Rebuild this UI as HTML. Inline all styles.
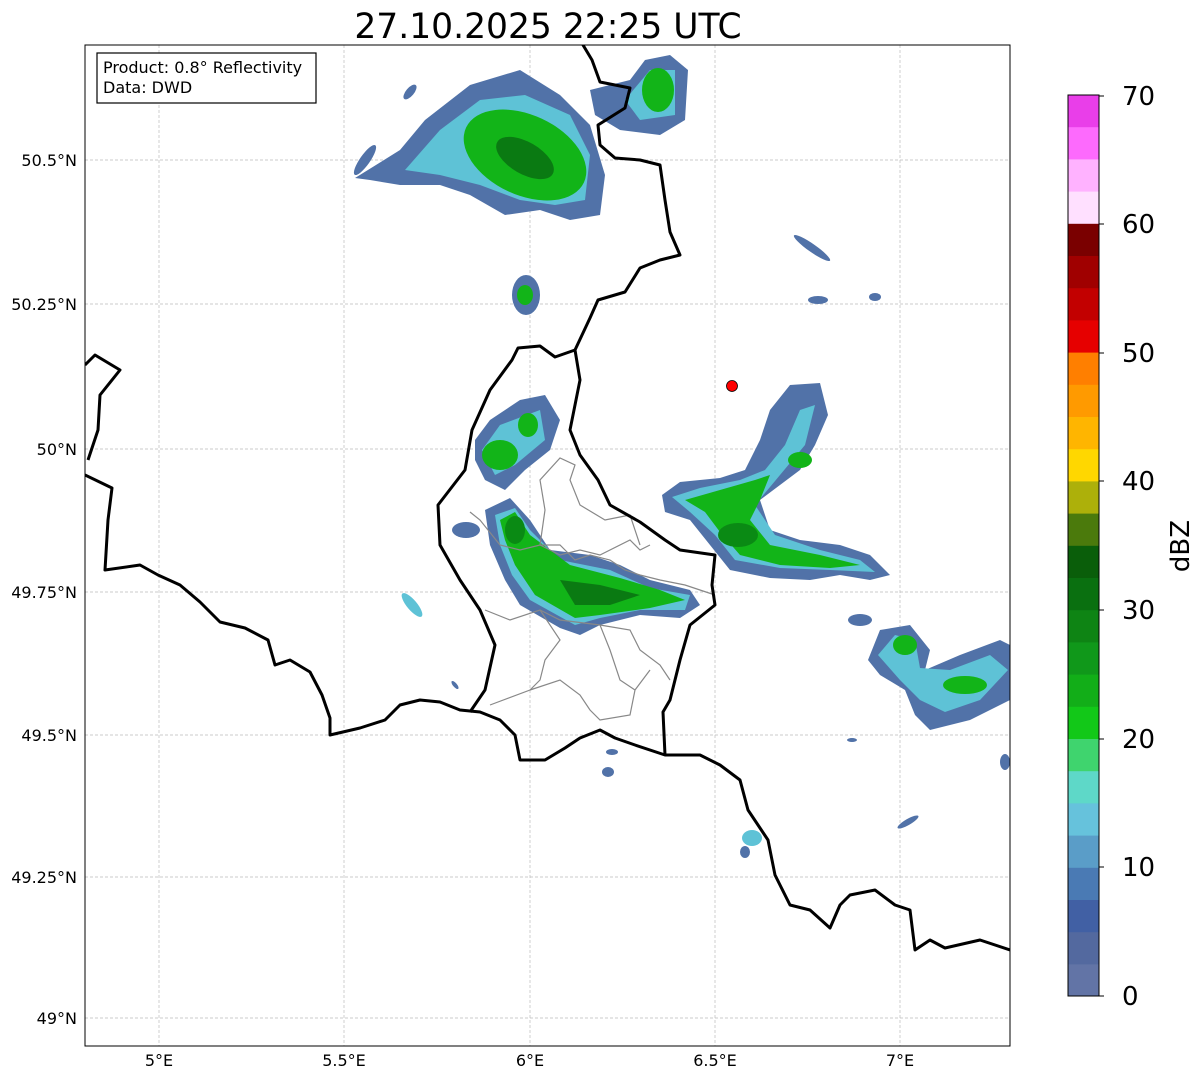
<!DOCTYPE html>
<html><head><meta charset="utf-8"><style>
body{margin:0;background:#fff;width:1202px;height:1081px;overflow:hidden;font-family:"DejaVu Sans",sans-serif}
</style></head><body>
<svg width="1202" height="1081" viewBox="0 0 1202 1081" xmlns="http://www.w3.org/2000/svg" font-family="DejaVu Sans, sans-serif">
<defs>
<clipPath id="ax"><rect x="85" y="45" width="925" height="1001"/></clipPath>
</defs>
<text x="548" y="38" font-size="34.5" text-anchor="middle">27.10.2025 22:25 UTC</text>
<g clip-path="url(#ax)">
<g stroke="#bbb" stroke-width="0.7" stroke-dasharray="3,2">
<line x1="159" y1="45" x2="159" y2="1046"/><line x1="344" y1="45" x2="344" y2="1046"/><line x1="530" y1="45" x2="530" y2="1046"/><line x1="715" y1="45" x2="715" y2="1046"/><line x1="900" y1="45" x2="900" y2="1046"/>
<line x1="85" y1="160" x2="1010" y2="160"/><line x1="85" y1="304" x2="1010" y2="304"/><line x1="85" y1="449" x2="1010" y2="449"/><line x1="85" y1="592" x2="1010" y2="592"/><line x1="85" y1="735" x2="1010" y2="735"/><line x1="85" y1="877" x2="1010" y2="877"/><line x1="85" y1="1018" x2="1010" y2="1018"/>
</g>
<g>
<path d="M355,178 L400,150 L425,120 L470,85 L520,70 L560,95 L590,125 L605,175 L600,215 L570,220 L540,210 L505,215 L470,195 L440,185 L400,185 L370,180Z" fill="#5172a8"/>
<path d="M405,170 L440,130 L480,100 L525,95 L570,115 L590,155 L585,200 L555,205 L520,200 L480,185 L440,175Z" fill="#5ec2d6"/>
<ellipse cx="525" cy="155" rx="65" ry="40" transform="rotate(25 525 155)" fill="#12b418"/>
<ellipse cx="525" cy="158" rx="32" ry="16" transform="rotate(30 525 158)" fill="#0a7a12"/>
<path d="M590,90 L630,80 L645,60 L670,55 L688,70 L685,120 L660,135 L620,130 L595,115Z" fill="#5172a8"/>
<path d="M625,100 L650,70 L675,70 L675,115 L640,120Z" fill="#5ec2d6"/>
<ellipse cx="658" cy="90" rx="16" ry="22" fill="#12b418"/>
<ellipse cx="526" cy="295" rx="14" ry="20" fill="#5172a8"/><ellipse cx="525" cy="295" rx="8" ry="10" fill="#12b418"/>
<ellipse cx="365" cy="160" rx="5" ry="18" transform="rotate(35 365 160)" fill="#5172a8"/>
<ellipse cx="410" cy="92" rx="4" ry="9" transform="rotate(40 410 92)" fill="#5172a8"/>
<path d="M475,440 L490,420 L520,400 L545,395 L560,420 L550,450 L525,470 L505,490 L485,480 L475,460Z" fill="#5172a8"/>
<path d="M482,450 L500,425 L540,410 L545,440 L515,465 L495,475Z" fill="#5ec2d6"/>
<ellipse cx="500" cy="455" rx="18" ry="15" fill="#12b418"/><ellipse cx="528" cy="425" rx="10" ry="12" fill="#12b418"/>
<ellipse cx="466" cy="530" rx="14" ry="8" fill="#5172a8"/>
<path d="M485,510 L510,498 L530,520 L550,550 L590,555 L620,565 L650,580 L690,590 L700,605 L680,618 L640,615 L600,625 L580,635 L560,628 L520,605 L505,580 L490,545Z" fill="#5172a8"/>
<path d="M495,515 L515,508 L530,530 L560,560 L610,570 L650,588 L690,595 L685,610 L640,610 L600,618 L575,625 L530,600 L512,575 L500,545Z" fill="#5ec2d6"/>
<path d="M500,520 L515,512 L530,535 L570,565 L620,578 L660,590 L685,600 L650,608 L600,615 L575,618 L535,595 L515,565 L505,540Z" fill="#12b418"/>
<path d="M560,580 L600,585 L640,595 L610,605 L575,605Z" fill="#0a7a12"/>
<ellipse cx="515" cy="530" rx="10" ry="14" fill="#0a8a14"/>
<ellipse cx="412" cy="605" rx="5" ry="15" transform="rotate(-40 412 605)" fill="#5ec2d6"/>
<path d="M662,495 L680,482 L720,478 L745,470 L760,440 L770,410 L790,385 L820,383 L828,415 L815,445 L800,470 L780,485 L760,500 L770,530 L800,540 L840,545 L870,555 L890,575 L870,580 L840,575 L810,580 L770,578 L730,570 L710,545 L690,520 L665,512Z" fill="#5172a8"/>
<path d="M672,497 L700,488 L740,480 L765,470 L785,445 L800,410 L815,405 L805,445 L780,475 L755,505 L775,535 L820,550 L860,560 L875,572 L830,570 L780,568 L735,560 L715,535 L690,512Z" fill="#5ec2d6"/>
<path d="M685,500 L720,490 L755,480 L770,475 L760,500 L750,520 L770,545 L820,555 L860,565 L830,568 L780,565 L740,555 L720,532 L705,512Z" fill="#12b418"/>
<ellipse cx="738" cy="535" rx="20" ry="12" fill="#0a8a14"/>
<ellipse cx="800" cy="460" rx="12" ry="8" fill="#12b418"/>
<path d="M868,660 L880,630 L910,625 L930,650 L925,670 L960,655 L1000,640 L1010,645 L1010,700 L970,720 L930,730 L915,715 L905,690 L880,675Z" fill="#5172a8"/>
<path d="M878,655 L895,635 L915,640 L920,668 L950,670 L990,655 L1008,670 L980,700 L945,712 L920,700 L900,680Z" fill="#5ec2d6"/>
<ellipse cx="905" cy="645" rx="12" ry="10" fill="#12b418"/><ellipse cx="965" cy="685" rx="22" ry="9" fill="#12b418"/>
<ellipse cx="860" cy="620" rx="12" ry="6" fill="#5172a8"/>
<ellipse cx="812" cy="248" rx="4" ry="22" transform="rotate(-55 812 248)" fill="#5172a8"/>
<ellipse cx="818" cy="300" rx="10" ry="4" fill="#5172a8"/><ellipse cx="875" cy="297" rx="6" ry="4" fill="#5172a8"/>
<ellipse cx="608" cy="772" rx="6" ry="5" fill="#5172a8"/><ellipse cx="612" cy="752" rx="6" ry="3" fill="#5172a8"/>
<ellipse cx="752" cy="838" rx="10" ry="8" fill="#5ec2d6"/><ellipse cx="745" cy="852" rx="5" ry="6" fill="#5172a8"/>
<ellipse cx="908" cy="822" rx="3" ry="12" transform="rotate(60 908 822)" fill="#5172a8"/>
<ellipse cx="1005" cy="762" rx="5" ry="8" fill="#5172a8"/>
<ellipse cx="852" cy="740" rx="5" ry="2" fill="#5172a8"/>
<ellipse cx="455" cy="685" rx="2" ry="5" transform="rotate(-40 455 685)" fill="#5172a8"/>
</g>
<g fill="none" stroke="#888" stroke-width="1.2">
<path d="M470,512 L480,520 L500,545 L520,550 L540,545 L560,555 L580,550 L600,555 L630,540 L640,550 L650,545"/>
<path d="M540,545 L545,510 L540,480 L560,458 L575,465 L570,480 L580,505 L605,520 L630,515 L640,545"/>
<path d="M540,545 L560,545 L575,560 L590,555 L610,560 L625,570 L640,575 L660,580 L685,585 L715,595"/>
<path d="M485,610 L510,620 L540,610 L560,620 L600,625 L630,630 L640,650 L660,665 L670,680"/>
<path d="M540,610 L560,640 L545,660 L540,680 L530,690 L490,705"/>
<path d="M530,690 L560,680 L580,695 L590,710 L600,720 L630,715 L635,690 L650,670"/>
<path d="M600,625 L610,650 L620,680 L635,690"/>
</g>
<g fill="none" stroke="#000" stroke-width="3" stroke-linejoin="round">
<path d="M85,475 L112,488 L108,520 L105,570 L140,565 L158,575 L180,585 L200,602 L220,622 L245,628 L268,640 L275,665 L290,660 L310,672 L322,695 L330,718 L330,735 L360,728 L385,720 L400,705 L420,700 L440,702 L460,710 L480,712 L500,720 L515,735 L520,760 L545,760 L565,748 L580,738 L600,730 L615,738 L635,745 L665,755 L700,755 L720,765 L740,780 L748,810 L768,840 L775,875 L790,905 L810,910 L830,928 L840,905 L850,895 L875,890 L895,905 L910,910 L915,950 L930,940 L945,948 L980,940 L1010,950"/>
<path d="M85,365 L95,355 L120,370 L100,395 L98,430 L88,460"/>
<path d="M470,712 L485,690 L495,645 L480,610 L460,580 L440,545 L438,505 L465,470 L472,430 L490,390 L512,360 L518,348 L540,346 L555,357 L575,350 L580,380 L570,430 L580,455 L598,480 L610,505 L640,522 L665,540 L680,550 L715,555 L712,585 L715,605 L690,625 L680,660 L670,700 L663,712 L665,755"/>
<path d="M575,350 L590,318 L598,300 L625,292 L640,268 L660,260 L680,255 L670,232 L665,200 L660,165 L640,160 L615,158 L600,145 L598,125 L625,108 L630,88 L600,82 L592,60 L580,40"/>
</g>
<circle cx="732" cy="386" r="5.5" fill="#f00" stroke="#000" stroke-width="0.8"/>
</g>
<rect x="85" y="45" width="925" height="1001" fill="none" stroke="#000" stroke-width="1"/>
<rect x="97" y="53" width="219" height="50" fill="#fff" stroke="#000" stroke-width="1.2"/>
<text x="103" y="73" font-size="16">Product: 0.8° Reflectivity</text>
<text x="103" y="93" font-size="16">Data: DWD</text>
<g font-size="16" text-anchor="end">
<text x="77" y="166">50.5°N</text><text x="77" y="310">50.25°N</text><text x="77" y="455">50°N</text><text x="77" y="598">49.75°N</text><text x="77" y="741">49.5°N</text><text x="77" y="883">49.25°N</text><text x="77" y="1024">49°N</text>
</g>
<g font-size="16" text-anchor="middle">
<text x="159" y="1066">5°E</text><text x="344" y="1066">5.5°E</text><text x="530" y="1066">6°E</text><text x="715" y="1066">6.5°E</text><text x="900" y="1066">7°E</text>
</g>
<g>
<rect x="1068" y="95.0" width="31" height="32.6" fill="#e93ee9"/>
<rect x="1068" y="127.2" width="31" height="32.6" fill="#fd6afd"/>
<rect x="1068" y="159.4" width="31" height="32.6" fill="#ffb2ff"/>
<rect x="1068" y="191.6" width="31" height="32.6" fill="#ffe0ff"/>
<rect x="1068" y="223.8" width="31" height="32.6" fill="#7a0000"/>
<rect x="1068" y="256.0" width="31" height="32.6" fill="#a00000"/>
<rect x="1068" y="288.2" width="31" height="32.6" fill="#c20000"/>
<rect x="1068" y="320.4" width="31" height="32.6" fill="#e60000"/>
<rect x="1068" y="352.6" width="31" height="32.6" fill="#ff7f00"/>
<rect x="1068" y="384.8" width="31" height="32.6" fill="#ff9a00"/>
<rect x="1068" y="417.0" width="31" height="32.6" fill="#ffb500"/>
<rect x="1068" y="449.2" width="31" height="32.6" fill="#ffd700"/>
<rect x="1068" y="481.4" width="31" height="32.6" fill="#adb00a"/>
<rect x="1068" y="513.6" width="31" height="32.6" fill="#4b7a0c"/>
<rect x="1068" y="545.8" width="31" height="32.6" fill="#0a5e0a"/>
<rect x="1068" y="578.0" width="31" height="32.6" fill="#0a7010"/>
<rect x="1068" y="610.2" width="31" height="32.6" fill="#0e8414"/>
<rect x="1068" y="642.4" width="31" height="32.6" fill="#10981a"/>
<rect x="1068" y="674.6" width="31" height="32.6" fill="#12ae18"/>
<rect x="1068" y="706.8" width="31" height="32.6" fill="#12c818"/>
<rect x="1068" y="739.0" width="31" height="32.6" fill="#3fd46e"/>
<rect x="1068" y="771.2" width="31" height="32.6" fill="#5ed8c8"/>
<rect x="1068" y="803.4" width="31" height="32.6" fill="#66c2dc"/>
<rect x="1068" y="835.6" width="31" height="32.6" fill="#5a9dc8"/>
<rect x="1068" y="867.8" width="31" height="32.6" fill="#4a7ab4"/>
<rect x="1068" y="900.0" width="31" height="32.6" fill="#4160a4"/>
<rect x="1068" y="932.2" width="31" height="32.6" fill="#53699f"/>
<rect x="1068" y="964.4" width="31" height="31.6" fill="#6274a6"/>
<rect x="1068" y="95" width="31" height="901" fill="none" stroke="#000" stroke-width="1"/>
</g>
<g stroke="#000" stroke-width="1">
<line x1="1099" y1="96" x2="1104" y2="96"/><line x1="1099" y1="224" x2="1104" y2="224"/><line x1="1099" y1="353" x2="1104" y2="353"/><line x1="1099" y1="481" x2="1104" y2="481"/><line x1="1099" y1="610" x2="1104" y2="610"/><line x1="1099" y1="739" x2="1104" y2="739"/><line x1="1099" y1="867" x2="1104" y2="867"/><line x1="1099" y1="996" x2="1104" y2="996"/>
</g>
<g font-size="26">
<text x="1122" y="105">70</text><text x="1122" y="233">60</text><text x="1122" y="362">50</text><text x="1122" y="490">40</text><text x="1122" y="619">30</text><text x="1122" y="748">20</text><text x="1122" y="876">10</text><text x="1122" y="1005">0</text>
</g>
<text x="0" y="0" font-size="26" text-anchor="middle" transform="translate(1189 546) rotate(-90)">dBZ</text>
</svg>
</body></html>
